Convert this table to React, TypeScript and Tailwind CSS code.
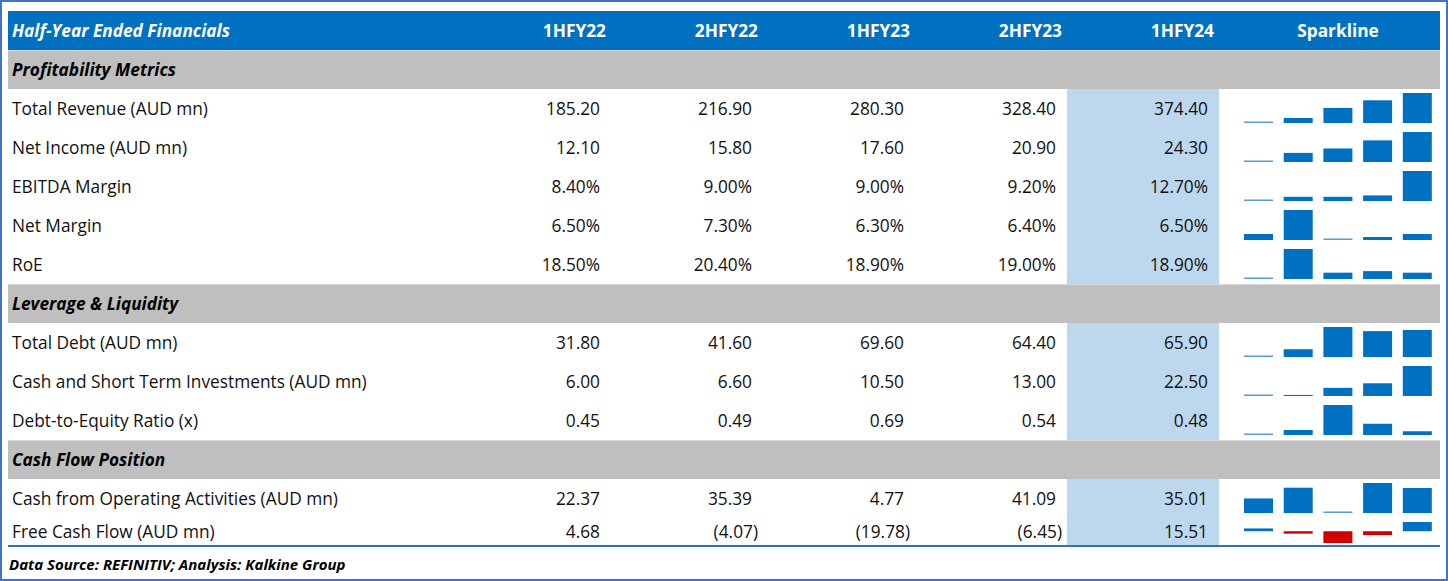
type Row =
  | { kind: 'section'; label: string }
  | { kind: 'data'; label: string; values: string[]; nums: number[]; short?: boolean };

const rows: Row[] = [
  { kind: 'section', label: 'Profitability Metrics' },
  { kind: 'data', label: 'Total Revenue (AUD mn)', values: ['185.20', '216.90', '280.30', '328.40', '374.40'], nums: [185.2, 216.9, 280.3, 328.4, 374.4] },
  { kind: 'data', label: 'Net Income (AUD mn)', values: ['12.10', '15.80', '17.60', '20.90', '24.30'], nums: [12.1, 15.8, 17.6, 20.9, 24.3] },
  { kind: 'data', label: 'EBITDA Margin', values: ['8.40%', '9.00%', '9.00%', '9.20%', '12.70%'], nums: [8.4, 9.0, 9.0, 9.2, 12.7] },
  { kind: 'data', label: 'Net Margin', values: ['6.50%', '7.30%', '6.30%', '6.40%', '6.50%'], nums: [6.5, 7.3, 6.3, 6.4, 6.5] },
  { kind: 'data', label: 'RoE', values: ['18.50%', '20.40%', '18.90%', '19.00%', '18.90%'], nums: [18.5, 20.4, 18.9, 19.0, 18.9] },
  { kind: 'section', label: 'Leverage & Liquidity' },
  { kind: 'data', label: 'Total Debt (AUD mn)', values: ['31.80', '41.60', '69.60', '64.40', '65.90'], nums: [31.8, 41.6, 69.6, 64.4, 65.9] },
  { kind: 'data', label: 'Cash and Short Term Investments (AUD mn)', values: ['6.00', '6.60', '10.50', '13.00', '22.50'], nums: [6.0, 6.6, 10.5, 13.0, 22.5] },
  { kind: 'data', label: 'Debt-to-Equity Ratio (x)', values: ['0.45', '0.49', '0.69', '0.54', '0.48'], nums: [0.45, 0.49, 0.69, 0.54, 0.48] },
  { kind: 'section', label: 'Cash Flow Position' },
  { kind: 'data', label: 'Cash from Operating Activities (AUD mn)', values: ['22.37', '35.39', '4.77', '41.09', '35.01'], nums: [22.37, 35.39, 4.77, 41.09, 35.01] },
  { kind: 'data', label: 'Free Cash Flow (AUD mn)', values: ['4.68', '(4.07)', '(19.78)', '(6.45)', '15.51'], nums: [4.68, -4.07, -19.78, -6.45, 15.51], short: true },
];

const headers = ['1HFY22', '2HFY22', '1HFY23', '2HFY23', '1HFY24'];

function Sparkline({ nums, short }: { nums: number[]; short?: boolean }) {
  const h = short ? 27 : 39;
  const xs = (i: number) => 25 + i * 39.7;
  const min = Math.min(...nums);
  const max = Math.max(...nums);

  if (min < 0) {
    // mixed signs: axis at zero, whole range mapped to 21px
    const span = 21;
    const top = 4;
    const scale = span / (max - min);
    const axis = top + max * scale;
    return (
      <svg width="221" height={h} className="block">
        {nums.map((v, i) => {
          const bh = Math.max(Math.abs(v) * scale, 1.5);
          const y = v >= 0 ? axis - bh : axis;
          return <rect key={i} x={xs(i)} y={y} width={29} height={bh} fill={v >= 0 ? '#0070c0' : '#d00000'} />;
        })}
      </svg>
    );
  }

  const bottom = h - 5;
  return (
    <svg width="221" height={h} className="block">
      {nums.map((v, i) => {
        const bh = (v - min) / (max - min) * 30;
        if (bh < 1) {
          return <rect key={i} x={xs(i)} y={bottom - 1.5} width={29} height={1.5} fill="#5b9bd5" />;
        }
        return <rect key={i} x={xs(i)} y={bottom - bh} width={29} height={bh} fill="#0070c0" />;
      })}
    </svg>
  );
}

export default function App() {
  return (
    <div
      className="w-[1448px] h-[581px] border-2 border-[#4472c4] bg-white pt-[9px] pl-[6px] text-[#111] overflow-hidden"
      style={{ fontFamily: '"Open Sans", Lato, sans-serif' }}
    >
      <div className="w-[1432px]">
        <div className="grid grid-cols-[451px_repeat(5,152px)_1fr] h-[39px] bg-[#0070c0] text-white font-bold text-[17.3px] items-center">
          <div className="pl-[4px] italic">Half-Year Ended Financials</div>
          {headers.map((h) => (
            <div key={h} className="text-right pr-[5px]">{h}</div>
          ))}
          <div className="text-center pl-[17px]">Sparkline</div>
        </div>

        {rows.map((r) =>
          r.kind === 'section' ? (
            <div key={r.label} className="h-[39px] bg-[#bfbfbf] flex items-center pl-[4px] font-bold italic text-[17.3px] text-black border-t border-[#d9d9d9]">
              {r.label}
            </div>
          ) : (
            <div
              key={r.label}
              className={`grid grid-cols-[451px_repeat(5,152px)_1fr] text-[17.3px] ${r.short ? 'h-[27px]' : 'h-[39px]'}`}
            >
              <div className="pl-[4px] flex items-center">{r.label}</div>
              {r.values.map((v, i) => (
                <div
                  key={i}
                  className={`flex items-center justify-end ${v.startsWith('(') ? 'pr-[5px]' : 'pr-[11px]'} ${i === 4 ? 'bg-[#bdd7ee]' : ''}`}
                >
                  {v}
                </div>
              ))}
              <div>
                <Sparkline nums={r.nums} short={r.short} />
              </div>
            </div>
          )
        )}
        <div className="h-[2px] bg-[#2e75b6]" />
        <div className="pt-[6px] pl-[1px] font-bold italic text-[15px] text-black">
          Data Source: REFINITIV; Analysis: Kalkine Group
        </div>
      </div>
    </div>
  );
}
